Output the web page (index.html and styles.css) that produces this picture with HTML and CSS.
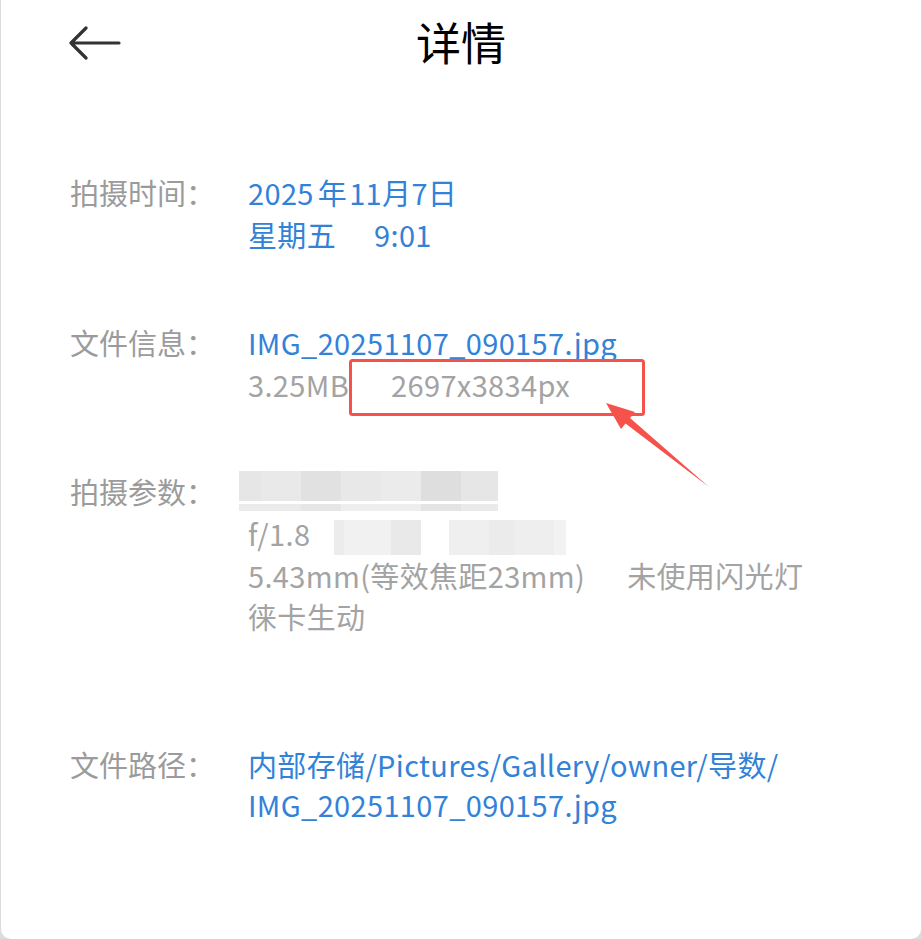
FILE: index.html
```html
<!DOCTYPE html>
<html lang="zh-CN">
<head>
<meta charset="utf-8">
<title>详情</title>
<link rel="stylesheet" href="styles.css">
</head>
<body>
<div class="card">
  <header class="topbar">
    <svg class="back" width="54" height="34" viewBox="0 0 54 34">
      <path d="M3 17 H51 M18 2 L3 17 L18 32" fill="none" stroke="#333" stroke-width="3.2" stroke-linecap="round" stroke-linejoin="round"/>
    </svg>
    <h1 class="title">详情</h1>
  </header>

  <main class="details">
    <section class="row row-time">
      <div class="label">拍摄时间：</div>
      <div class="value blue">
        <div class="line">2025<span class="cjk-gap">年</span>11月7日</div>
        <div class="line">星期五<span class="gap-time">9:01</span></div>
      </div>
    </section>

    <section class="row row-file">
      <div class="label">文件信息：</div>
      <div class="value">
        <div class="line blue">IMG_20251107_090157.jpg</div>
        <div class="line grey">3.25MB<span class="gap-size">2697x3834px</span></div>
      </div>
    </section>

    <section class="row row-params">
      <div class="label">拍摄参数：</div>
      <div class="value grey">
        <div class="line line-blur">
          <div class="blur blur-a"></div>
          <div class="blur blur-a-strip"></div>
        </div>
        <div class="line">f/1.8<span class="blur blur-b"></span><span class="blur blur-c"></span></div>
        <div class="line">5.43mm(等效焦距23mm)<span class="gap-flash">未使用闪光灯</span></div>
        <div class="line">徕卡生动</div>
      </div>
    </section>

    <section class="row row-path">
      <div class="label">文件路径：</div>
      <div class="value blue">
        <div class="line">内部存储/Pictures/Gallery/owner/导数/</div>
        <div class="line">IMG_20251107_090157.jpg</div>
      </div>
    </section>
  </main>

  <svg class="annotation" width="922" height="939" viewBox="0 0 922 939">
    <rect x="350.5" y="360.5" width="293" height="54" rx="2" fill="none" stroke="#f5524c" stroke-width="3"/>
    <polygon points="606,403 635,412 630,418 709,487 625.5,423.5 621,429" fill="#f5524c"/>
  </svg>
</div>
</body>
</html>
```

FILE: styles.css
```css
html, body {
  margin: 0;
  padding: 0;
}

body {
  background: #dcdcdc;
  font-family: "Noto Sans CJK SC", "Noto Sans", sans-serif;
}

.card {
  position: relative;
  margin: 0 1px;
  height: 939px;
  background: #ffffff;
  border-radius: 0 0 10px 10px;
  overflow: hidden;
}

.topbar {
  position: relative;
  height: 84px;
  display: flex;
  align-items: center;
  justify-content: center;
}

.back {
  position: absolute;
  left: 67px;
  top: 26px;
}

.title {
  margin: 0;
  font-size: 45px;
  font-weight: 400;
  color: #000;
  line-height: 1;
  transform: translate(0px, -1px);
}

.details {
  padding: 87px 0 0 69px;
  display: flex;
  flex-direction: column;
}

.row {
  display: grid;
  grid-template-columns: 178px 1fr;
  font-size: 29px;
  line-height: 42px;
}

.row-file { margin-top: 66px; }
.row-params { margin-top: 66px; line-height: 41px; }
.row-path { margin-top: 107px; line-height: 40px; }

.label {
  color: #9b9b9b;
}

.value {
  letter-spacing: 0.35px;
}

.blue { color: #3282d8; }
.grey { color: #a3a3a3; }
.value.grey { color: #a3a3a3; }

.line {
  white-space: nowrap;
}

.cjk-gap { margin: 0 2px 0 4px; }
.gap-time { margin-left: 38px; }
.gap-size { margin-left: 42px; }
.gap-flash { margin-left: 42px; }

.line-blur {
  height: 42px;
  position: relative;
}

.blur {
  display: inline-block;
}

.blur-a {
  position: absolute;
  left: -9px;
  top: 0px;
  width: 259px;
  height: 30px;
  background: linear-gradient(to right,
    #e6e6e6 0 22px, #e9e9e9 22px 62px, #e1e1e1 62px 102px,
    #e8e8e8 102px 142px, #ebebeb 142px 182px, #dedede 182px 222px, #e6e6e6 222px);
}

.blur-a-strip {
  position: absolute;
  left: -9px;
  top: 33px;
  width: 259px;
  height: 7px;
  background: linear-gradient(to right,
    #ebebeb 0 62px, #e6e6e6 62px 102px, #eeeeee 102px 182px, #e4e4e4 182px 222px, #eaeaea 222px);
}

.blur-b {
  width: 87px;
  height: 35px;
  margin-left: 24px;
  vertical-align: -9px;
  background: linear-gradient(to right, #ececec 0 10px, #f1f1f1 10px 57px, #e9e9e9 57px);
}

.blur-c {
  width: 117px;
  height: 35px;
  margin-left: 28px;
  vertical-align: -9px;
  background: linear-gradient(to right, #efefef 0 40px, #ebebeb 40px 65px, #eeeeee 65px 105px, #f2f2f2 105px);
}

.annotation {
  position: absolute;
  left: -1px;
  top: 0;
  pointer-events: none;
}
```
